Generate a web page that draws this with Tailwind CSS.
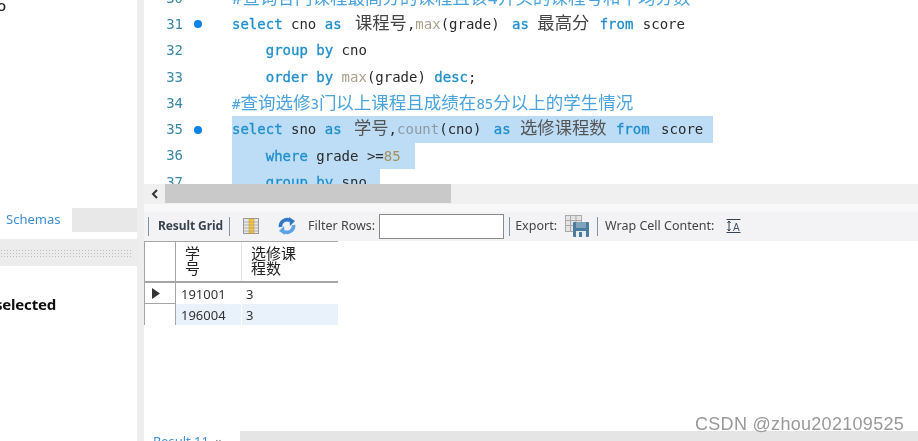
<!DOCTYPE html>
<html><head><meta charset="utf-8"><script src="https://cdn.jsdelivr.net/npm/@tailwindcss/browser@4"></script></head>
<body class="m-0 bg-white">
<div class="relative w-[918px] h-[441px] overflow-hidden bg-white flex font-['Liberation_Sans','Noto_Sans_CJK_SC',sans-serif] blur-[0.4px]">
  <!-- left panel -->
  <div class="w-[137px] h-full flex flex-col shrink-0 overflow-hidden">
    <div class="h-[208px] shrink-0 text-[15px] leading-[10px] font-['Noto_Sans'] text-[#222] font-medium -ml-[3px]">o</div>
    <div class="h-[24px] shrink-0 flex">
      <div class="w-[72px] pl-[6px] text-[13px] leading-[23px] text-[#3d8fd1] font-['Noto_Sans']">Schemas</div>
      <div class="flex-1 bg-[#e8e8e8]"></div>
    </div>
    <div class="h-[7px] shrink-0"></div>
    <div class="h-[27px] shrink-0 bg-[#ececec] flex items-center">
      <div class="w-[131px] h-[8px] bg-[radial-gradient(#bcbcbc_1px,transparent_1px)] bg-[length:3px_3px]"></div>
    </div>
    <div class="pt-[28px] -ml-[5px] text-[15px] leading-[20px] font-bold text-[#111] font-['Noto_Sans'] whitespace-nowrap tracking-[-0.2px]">selected</div>
  </div>
  <div class="w-[7px] h-full bg-[#eeeeef] shrink-0"></div>
  <!-- right column -->
  <div class="flex-1 h-full flex flex-col min-w-0">
    <!-- editor -->
    <div class="h-[184px] shrink-0 overflow-hidden font-['DejaVu_Sans_Mono','Noto_Sans_CJK_SC',monospace] text-[14px] text-[#2a2a2a]">
      <div class="-mt-[15px] flex flex-col">
        <div class="h-[26.3px] flex items-center">
          <div class="w-[39px] text-right text-[#3a87a3]">30</div><div class="w-[19px]"></div><div class="w-[30px]"></div>
          <div class="whitespace-nowrap text-[#4aa3dc] text-[17.5px]">#查询各门课程最高分的课程且该4开头的课程号和平均分数</div>
        </div>
        <div class="h-[26.3px] flex items-center">
          <div class="w-[39px] text-right text-[#3a87a3]">31</div><div class="w-[19px] flex justify-end"><span class="w-[8px] h-[8px] rounded-full bg-[#0a84e8]"></span></div><div class="w-[30px]"></div>
          <div class="whitespace-pre"><span class="text-[#1f8fcc] [-webkit-text-stroke:0.3px_#1f8fcc]">select</span> cno <span class="text-[#1f8fcc] [-webkit-text-stroke:0.3px_#1f8fcc]">as</span> <span class="text-[17.3px] ml-[5px] text-[#444]">课程号</span>,<span class="text-[#a8a08a]">max</span>(grade) <span class="ml-[4px] text-[#1f8fcc] [-webkit-text-stroke:0.3px_#1f8fcc]">as</span> <span class="text-[17.3px] mr-[2px] text-[#444]">最高分</span> <span class="text-[#1f8fcc] [-webkit-text-stroke:0.3px_#1f8fcc]">from</span> <span class="ml-[1px]">score</span></div>
        </div>
        <div class="h-[26.3px] flex items-center">
          <div class="w-[39px] text-right text-[#3a87a3]">32</div><div class="w-[19px]"></div><div class="w-[30px]"></div>
          <div class="whitespace-pre">    <span class="text-[#1f8fcc] [-webkit-text-stroke:0.3px_#1f8fcc]">group by</span> cno</div>
        </div>
        <div class="h-[26.3px] flex items-center">
          <div class="w-[39px] text-right text-[#3a87a3]">33</div><div class="w-[19px]"></div><div class="w-[30px]"></div>
          <div class="whitespace-pre">    <span class="text-[#1f8fcc] [-webkit-text-stroke:0.3px_#1f8fcc]">order by</span> <span class="text-[#a8a08a]">max</span>(grade) <span class="text-[#1f8fcc] [-webkit-text-stroke:0.3px_#1f8fcc]">desc</span>;</div>
        </div>
        <div class="h-[26.3px] flex items-center">
          <div class="w-[39px] text-right text-[#3a87a3]">34</div><div class="w-[19px]"></div><div class="w-[30px]"></div>
          <div class="whitespace-nowrap text-[#4aa3dc]"><span>#</span><span class="text-[17.5px]">查询选修</span>3<span class="text-[17.5px]">门以上课程且成绩在</span>85<span class="text-[17.5px]">分以上的学生情况</span></div>
        </div>
        <div class="h-[26.3px] flex items-center">
          <div class="w-[39px] text-right text-[#3a87a3]">35</div><div class="w-[19px] flex justify-end"><span class="w-[8px] h-[8px] rounded-full bg-[#0a84e8]"></span></div><div class="w-[30px]"></div>
          <div class="whitespace-pre bg-[#bddcf5] h-full w-[481px] leading-[25px]"><span class="text-[#1f8fcc] [-webkit-text-stroke:0.3px_#1f8fcc]">select</span> sno <span class="text-[#1f8fcc] [-webkit-text-stroke:0.3px_#1f8fcc]">as</span> <span class="text-[17.3px] ml-[4px] text-[#555]">学号</span>,<span class="text-[#8f9aa3]">count</span>(cno) <span class="ml-[4px] text-[#1f8fcc] [-webkit-text-stroke:0.3px_#1f8fcc]">as</span> <span class="text-[17.3px] ml-[1px] mr-[1px] text-[#555]">选修课程数</span> <span class="text-[#1f8fcc] [-webkit-text-stroke:0.3px_#1f8fcc]">from</span> <span class="ml-[3px]">score</span></div>
        </div>
        <div class="h-[26.3px] flex items-center">
          <div class="w-[39px] text-right text-[#3a87a3]">36</div><div class="w-[19px]"></div><div class="w-[30px]"></div>
          <div class="whitespace-pre bg-[#bddcf5] h-full w-[183px] leading-[26px]">    <span class="text-[#1f8fcc] [-webkit-text-stroke:0.3px_#1f8fcc]">where</span> grade &gt;=<span class="text-[#a8905a]">85</span></div>
        </div>
        <div class="h-[26.3px] flex items-center">
          <div class="w-[39px] text-right text-[#3a87a3]">37</div><div class="w-[19px]"></div><div class="w-[30px]"></div>
          <div class="whitespace-pre bg-[#bddcf5] h-full w-[148px] leading-[26px]">    <span class="text-[#1f8fcc] [-webkit-text-stroke:0.3px_#1f8fcc]">group by</span> sno</div>
        </div>
      </div>
    </div>
    <!-- h scrollbar -->
    <div class="h-[20px] shrink-0 bg-[#f0f0f0] flex items-start">
      <div class="w-[21px] h-[19px] flex items-center justify-center">
        <svg width="8" height="10" viewBox="0 0 8 10"><path d="M6 1 2 5l4 4" fill="none" stroke="#333" stroke-width="2"/></svg>
      </div>
      <div class="w-[286px] h-[19px] bg-[#c9c9c9]"></div>
    </div>
    <!-- gap -->
    <div class="h-[8px] shrink-0 bg-[#f8f8f8]"></div>
    <!-- toolbar -->
    <div class="h-[28px] shrink-0 bg-[#f3f3f6] flex items-center text-[12.5px] text-[#444] font-['Noto_Sans'] whitespace-nowrap">
      <div class="ml-[4px] w-px h-[19px] bg-[#7f95a8]"></div>
      <div class="ml-[9px] font-bold text-[12px] text-[#3a4450] w-[69px] tracking-[-0.1px]">Result Grid</div>
      <div class="ml-[2px] w-px h-[19px] bg-[#7f95a8]"></div>
      <svg class="ml-[13px]" width="16" height="16" viewBox="0 0 16 16"><rect x="0.5" y="0.5" width="15" height="15" fill="#e8e8e8" stroke="#999"/><rect x="6" y="1" width="5" height="14" fill="#f9c83a" stroke="#c9982a" stroke-width=".5"/><path d="M1 4h14M1 7h14M1 10h14M1 13h14" stroke="#999" stroke-width=".7"/></svg>
      <svg class="ml-[18px]" width="20" height="18" viewBox="0 0 20 18"><path d="M3.500 10A6.500 6.500 0 0 1 13 3.500" fill="none" stroke="#2f78c4" stroke-width="3.600"/><path d="M12 0l6 4-5 5z" fill="#2f78c4"/><path d="M16.500 8A6.500 6.500 0 0 1 7 14.500" fill="none" stroke="#5ba3e6" stroke-width="3.600"/><path d="M8 18l-6-4 5-5z" fill="#5ba3e6"/></svg>
      <span class="ml-[11px]">Filter Rows:</span>
      <div class="ml-[4px] w-[125px] h-[25px] bg-white border border-[#8a8a8a]"></div>
      <div class="ml-[5px] w-px h-[19px] bg-[#7f95a8]"></div>
      <span class="ml-[5px]">Export:</span>
      <svg class="ml-[8px]" width="24" height="22" viewBox="0 0 24 22"><rect x="0.5" y="0.5" width="16" height="16" fill="#e4e4e4" stroke="#aaa"/><path d="M0 5.500h16M0 10.500h16M5.500 0v16M11 0v16" stroke="#aaa"/><rect x="8" y="7" width="16" height="15" rx="1" fill="#4a7d9d"/><rect x="11" y="7" width="10" height="6" fill="#7ea3bb"/><rect x="11" y="16" width="10" height="6" fill="#e6edf1"/><rect x="14" y="17" width="3" height="5" fill="#4a7d9d"/></svg>
      <div class="ml-[8px] w-px h-[19px] bg-[#7f95a8]"></div>
      <span class="ml-[7px]">Wrap Cell Content:</span>
      <svg class="ml-[12px]" width="15" height="16" viewBox="0 0 15 16"><path d="M0.500 1.500h14M0.500 14.500h14M3 3v10M1.500 5 3 3l1.500 2M1.500 11 3 13l1.500-2" fill="none" stroke="#345" stroke-width="1"/><text x="7" y="12.500" font-size="10" fill="#456" font-family="Liberation Sans">A</text></svg>
    </div>
    <!-- grid -->
    <div class="h-[1px] shrink-0 bg-[#f3f3f6]"></div>
    <div class="w-[194px] shrink-0 text-[13px] text-[#333] font-['Noto_Sans','Noto_Sans_CJK_SC',sans-serif]">
      <div class="flex h-[42px] border-t border-b-2 border-[#a6a6a6]">
        <div class="w-[32px] border-x border-[#a6a6a6] shrink-0"></div>
        <div class="w-[66px] border-r border-[#e4e4e4] pl-[9px] pt-[4px] text-[15px] leading-[15px] text-[#222]">学<br>号</div>
        <div class="flex-1 pl-[9px] pt-[4px] text-[15px] leading-[15px] text-[#222]">选修课<br>程数</div>
      </div>
      <div class="flex h-[21px]">
        <div class="w-[32px] border-x border-b border-[#a6a6a6] shrink-0 flex items-center pl-[7px]">
          <svg width="8" height="11" viewBox="0 0 8 11"><path d="M0 0l8 5.500L0 11z" fill="#333"/></svg>
        </div>
        <div class="w-[66px] pl-[5px] leading-[23px]">191001</div>
        <div class="flex-1 pl-[4px] leading-[23px]">3</div>
      </div>
      <div class="flex h-[21px]">
        <div class="w-[32px] border-x border-[#a6a6a6] shrink-0"></div>
        <div class="w-[66px] pl-[5px] leading-[23px] bg-[#e9f1fb] border-r border-white">196004</div>
        <div class="flex-1 pl-[4px] leading-[23px] bg-[#e9f1fb]">3</div>
      </div>
    </div>
    <div class="flex-1"></div>
    <!-- bottom tabs -->
    <div class="h-[10px] shrink-0 flex overflow-hidden">
      <div class="w-[96px] pl-[9px] text-[13px] leading-[20px] text-[#3d8fd1] font-['Noto_Sans'] whitespace-nowrap">Result 11 <span class="text-[#666] text-[11px] ml-[3px]">×</span></div>
      <div class="flex-1 bg-[#e5e5e5]"></div>
    </div>
  </div>
  <div class="absolute left-[695px] top-[414px] text-[18px] leading-[20px] text-[#999] tracking-[0.3px] whitespace-nowrap">CSDN @zhou202109525</div>
</div>
</body></html>
